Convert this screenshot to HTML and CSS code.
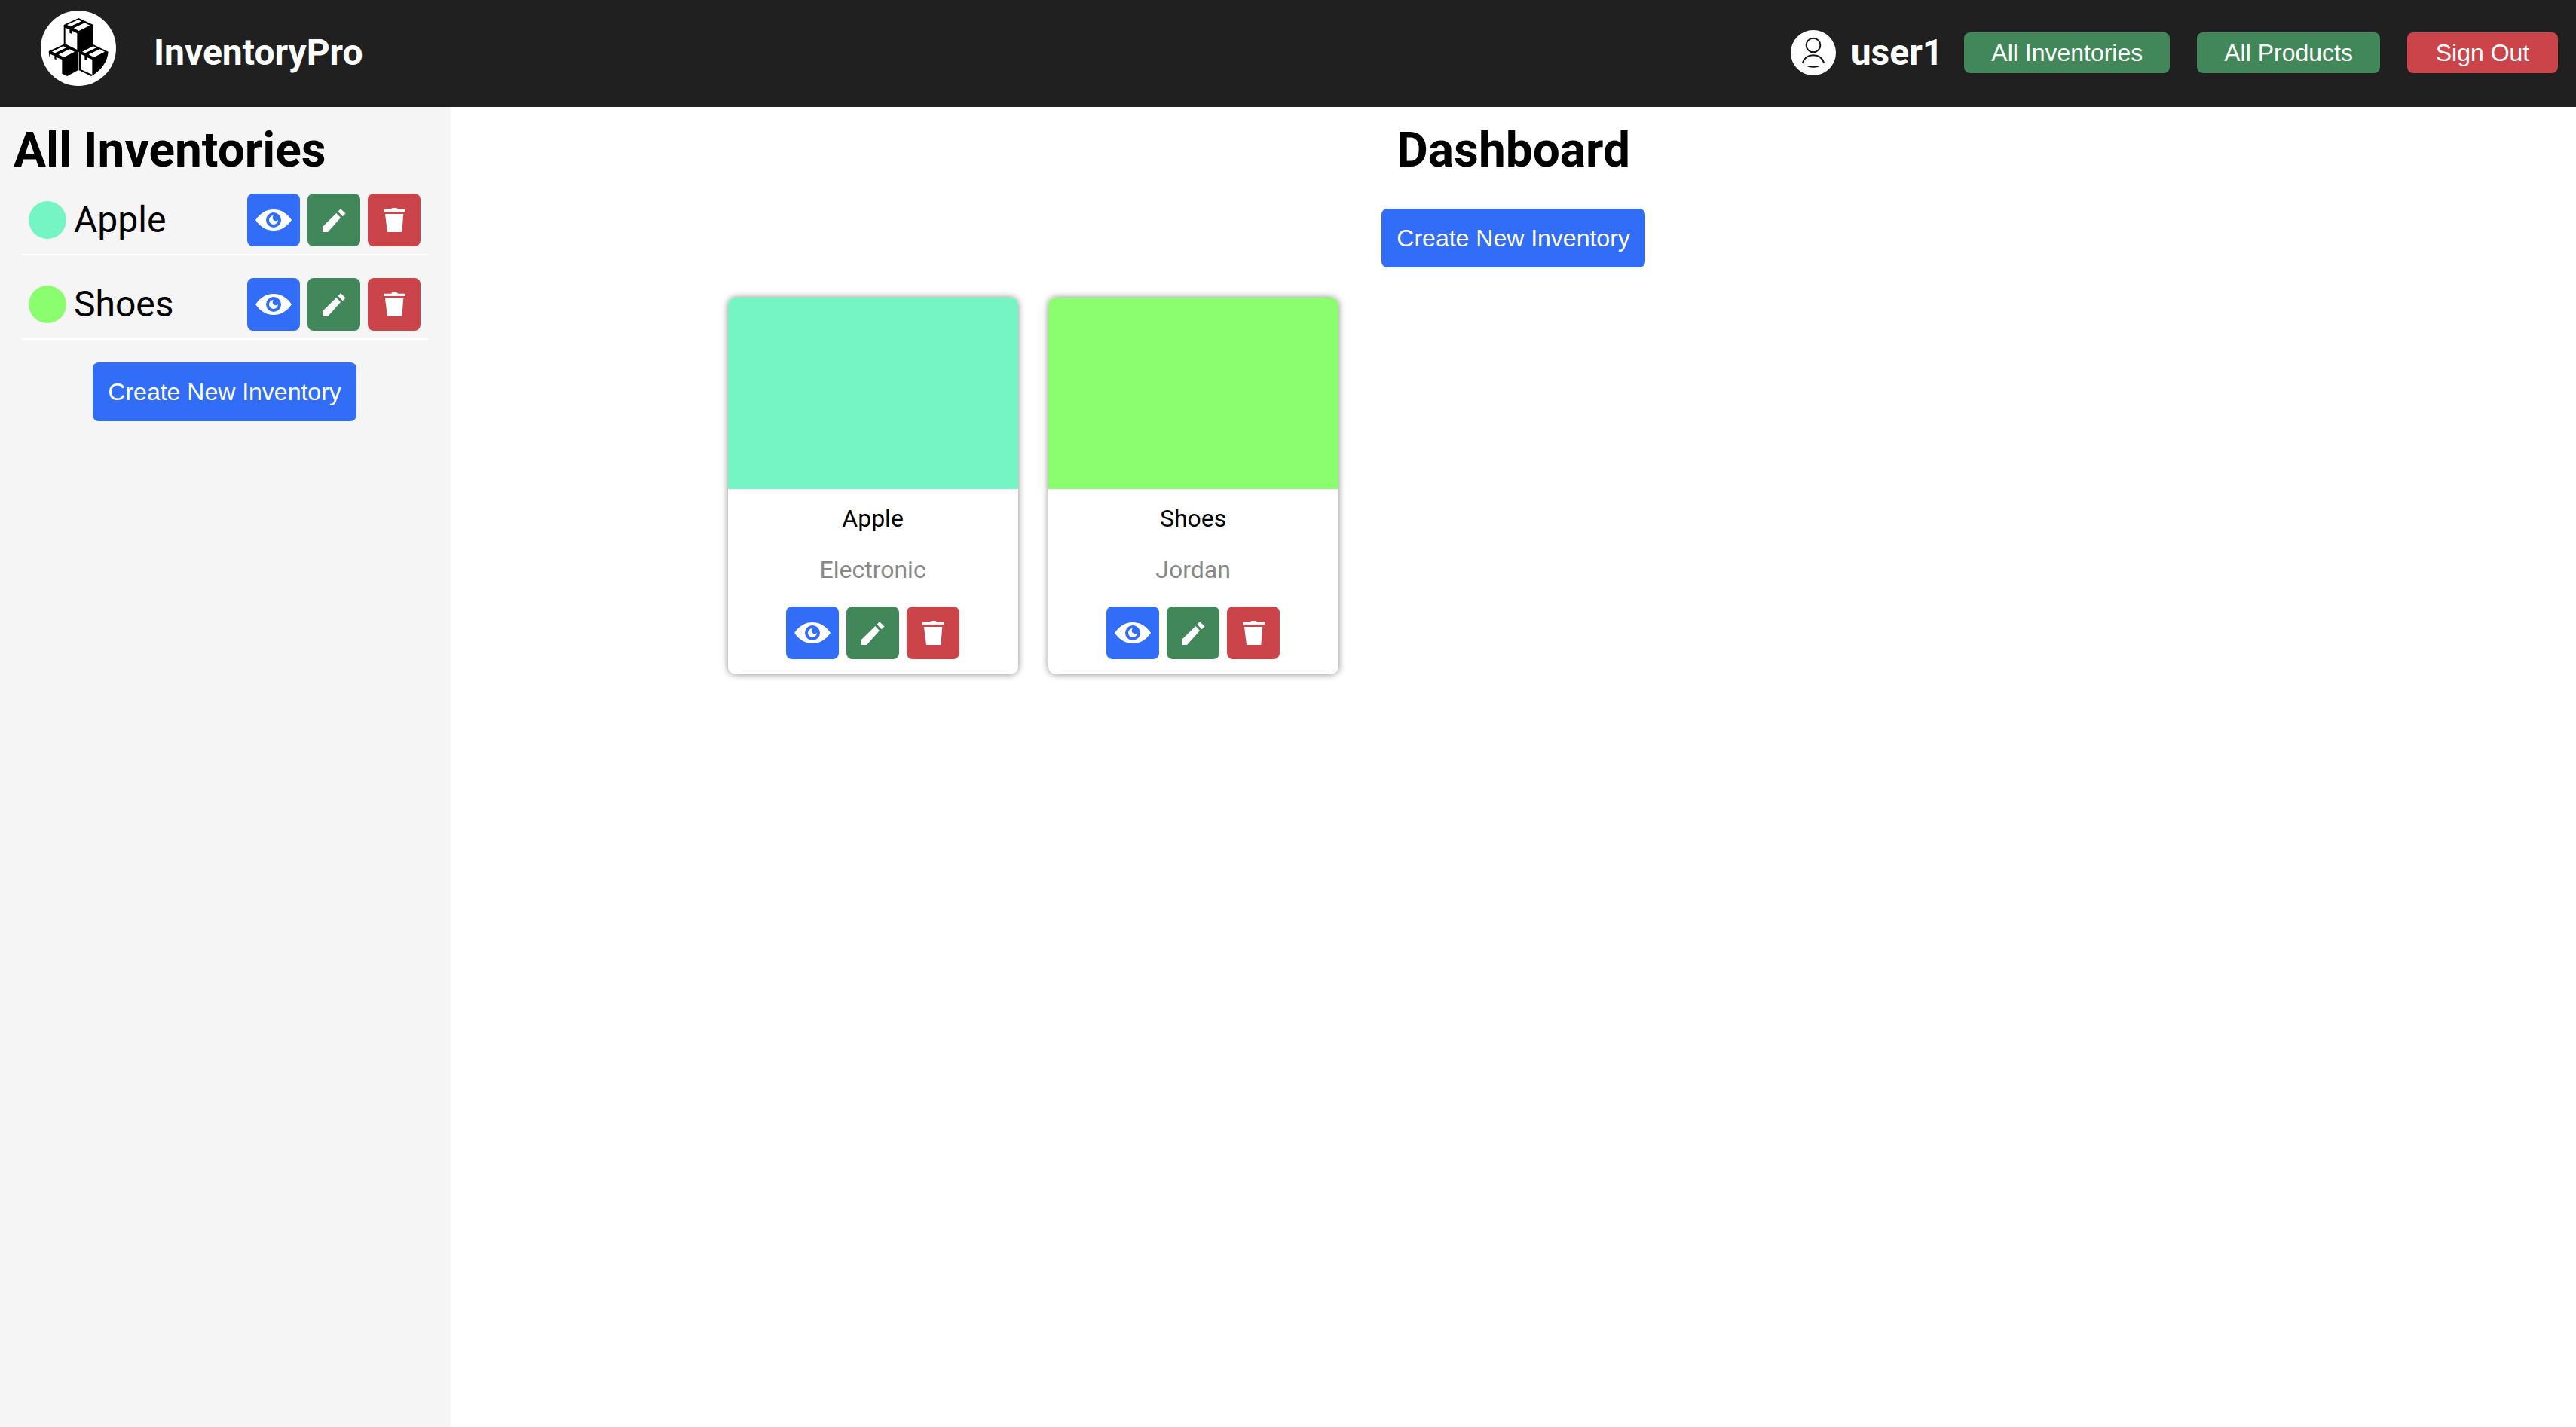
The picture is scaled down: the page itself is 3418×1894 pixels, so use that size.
FILE: index.html
```html
<!DOCTYPE html>
<html lang="en">
<head>
<meta charset="utf-8">
<meta name="viewport" content="width=device-width, initial-scale=1">
<title>InventoryPro</title>
<link rel="stylesheet" href="styles.css">
</head>
<body>
<svg class="sprite" aria-hidden="true">
  <symbol id="eye" viewBox="0 0 48 28">
    <path fill-rule="evenodd" d="M0 14C7 4 15 0 24 0s17 4 24 14c-7 10-15 14-24 14S7 24 0 14zM24 4a10 10 0 1 0 0 20 10 10 0 0 0 0-20z"/>
    <path d="M24 8a6 6 0 1 0 6 6 4 4 0 0 1-6-6z"/>
  </symbol>
  <symbol id="pencil" viewBox="0 0 31 31">
    <path d="M0 24 18.3 6l5.7 6L7 31H0zM20.6 3.8 24 0l6.5 6.6-3.8 3.7z"/>
  </symbol>
  <symbol id="trash" viewBox="0 0 29 32">
    <path d="M0 1.7h10.2Q10.500 0 12 0h5q1.500 0 1.800 1.700H29V5H0zM2 8h24.300l-2 24H5z"/>
  </symbol>
</svg>

<header class="topbar">
  <a class="brand" href="#">
    <svg class="logo" viewBox="42 42 300 300" aria-hidden="true">
      <circle cx="192" cy="192" r="150" fill="#fff"/>
      <path d="M193 72 252 99V178L311 206Q306 262 250 299L243 303 195 280H190L148 303 127 293V237L104 228V238L97 235V223L80 215V238Q75 222 74 204L134 176V99z"/>
      <g fill="#fff">
        <path d="M140 110 157 118V131L168 136V123L187 133V198L140 175z"/>
        <path d="M147 99 191 79 204 85 160 106zM173 112 217 91 238 101 194 123z"/>
        <path d="M87 206 131 184 144 190 100 211zM113 217 157 196 177 206 134 228z"/>
        <path d="M207 206 251 184 264 190 220 211zM233 217 277 196 297 206 254 228z"/>
        <path d="M201 215 217 223V236L228 240V229L247 237V297L201 276z"/>
        <path d="M191 207H194V280H191z"/>
      </g>
    </svg>
    <span>InventoryPro</span>
  </a>
  <nav class="nav">
    <div class="user">
      <svg class="avatar" viewBox="30 30 180 180" aria-hidden="true">
        <circle cx="120" cy="120" r="90" fill="#fff"/>
        <g fill="none" stroke="#111" stroke-width="6"><circle cx="120" cy="90" r="28"/><path d="M77 162C83 142 99 130 120 130S157 142 163 162"/></g>
        <path fill="#111" d="M89 172H151Q120 187 89 172z"/>
      </svg>
      <span>user1</span>
    </div>
    <button class="btn nav-btn green" type="button">All Inventories</button>
    <button class="btn nav-btn green" type="button">All Products</button>
    <button class="btn nav-btn red" type="button">Sign Out</button>
  </nav>
</header>

<div class="layout">
  <aside class="sidebar">
    <h1>All Inventories</h1>
    <ul class="list">
      <li class="row">
        <span class="dot teal"></span><span class="name">Apple</span>
        <div class="actions">
          <button class="btn icon-btn blue" type="button" aria-label="View Apple"><svg class="eye"><use href="#eye"/></svg></button>
          <button class="btn icon-btn green" type="button" aria-label="Edit Apple"><svg class="pencil"><use href="#pencil"/></svg></button>
          <button class="btn icon-btn red" type="button" aria-label="Delete Apple"><svg class="trash"><use href="#trash"/></svg></button>
        </div>
      </li>
      <li class="row">
        <span class="dot lime"></span><span class="name">Shoes</span>
        <div class="actions">
          <button class="btn icon-btn blue" type="button" aria-label="View Shoes"><svg class="eye"><use href="#eye"/></svg></button>
          <button class="btn icon-btn green" type="button" aria-label="Edit Shoes"><svg class="pencil"><use href="#pencil"/></svg></button>
          <button class="btn icon-btn red" type="button" aria-label="Delete Shoes"><svg class="trash"><use href="#trash"/></svg></button>
        </div>
      </li>
    </ul>
    <button class="btn create blue" type="button">Create New Inventory</button>
  </aside>

  <main class="main">
    <h1>Dashboard</h1>
    <button class="btn create blue" type="button">Create New Inventory</button>
    <div class="cards">
      <article class="card">
        <div class="swatch teal"></div>
        <h2>Apple</h2>
        <p>Electronic</p>
        <div class="actions">
          <button class="btn icon-btn blue" type="button" aria-label="View Apple"><svg class="eye"><use href="#eye"/></svg></button>
          <button class="btn icon-btn green" type="button" aria-label="Edit Apple"><svg class="pencil"><use href="#pencil"/></svg></button>
          <button class="btn icon-btn red" type="button" aria-label="Delete Apple"><svg class="trash"><use href="#trash"/></svg></button>
        </div>
      </article>
      <article class="card">
        <div class="swatch lime"></div>
        <h2>Shoes</h2>
        <p>Jordan</p>
        <div class="actions">
          <button class="btn icon-btn blue" type="button" aria-label="View Shoes"><svg class="eye"><use href="#eye"/></svg></button>
          <button class="btn icon-btn green" type="button" aria-label="Edit Shoes"><svg class="pencil"><use href="#pencil"/></svg></button>
          <button class="btn icon-btn red" type="button" aria-label="Delete Shoes"><svg class="trash"><use href="#trash"/></svg></button>
        </div>
      </article>
    </div>
  </main>
</div>
</body>
</html>
```
FILE: styles.css
```css
* { box-sizing: border-box; margin: 0; padding: 0; }
body {
  min-height: 100vh;
  display: flex;
  flex-direction: column;
  font: 32px/40px Roboto, sans-serif;
  color: #000;
  background: #fff;
}
.sprite { display: none; }
h1 { font-size: 64px; line-height: 76px; font-weight: 700; }

.topbar {
  display: flex;
  justify-content: space-between;
  align-items: flex-start;
  padding: 14px 24px 28px 54px;
  background: #202020;
  color: #fff;
  font-size: 48px;
  line-height: 56px;
  font-weight: 700;
}
.brand { display: flex; gap: 50px; color: #fff; text-decoration: none; }
.brand span { padding-top: 28px; }
.logo { width: 100px; height: 100px; }
.nav { display: flex; align-items: center; gap: 36px; padding-top: 26px; }
.user { display: flex; align-items: center; gap: 20px; margin-right: -8px; }
.avatar { width: 60px; height: 60px; }

.btn {
  border: 0;
  border-radius: 8px;
  color: #fff;
  font: 32px/38px "Liberation Sans", Arial, sans-serif;
  cursor: pointer;
}
.nav-btn { min-width: 200px; padding: 8px 36px; }
.create { padding: 20px; }
.blue { background: #316df6; }
.green { background: #428759; }
.red { background: #cb444a; }
.teal { background: #75f5c4; }
.lime { background: #8bfe6f; }

.actions { display: flex; gap: 10px; }
.icon-btn {
  width: 70px;
  height: 70px;
  display: flex;
  align-items: center;
  justify-content: center;
}
.icon-btn svg { fill: #fff; }
.eye { width: 48px; height: 28px; }
.pencil { width: 31px; height: 31px; }
.trash { width: 29px; height: 32px; }

.layout { flex: 1; display: flex; }
.sidebar {
  width: 17.5%;
  display: flex;
  flex-direction: column;
  padding-top: 20px;
  border-right: 2px solid #f5f5f5;
  background: #f5f5f5;
}
.sidebar h1 { padding-left: 18px; }
.sidebar .create { align-self: center; }
.list { list-style: none; margin: 9px 28px 0; }
.row {
  display: flex;
  align-items: center;
  gap: 10px;
  margin-bottom: 20px;
  padding: 10px;
  border-bottom: 2px solid #fff;
}
.row + .row { margin-bottom: 30px; }
.dot { width: 50px; height: 50px; border-radius: 50%; }
.name { flex: 1; font-size: 48px; line-height: 56px; }

.main {
  flex: 1;
  display: flex;
  flex-direction: column;
  align-items: center;
  padding-top: 20px;
}
.main .create { margin-top: 39px; }
.cards {
  align-self: stretch;
  display: grid;
  grid-template-columns: repeat(5, 385px);
  justify-content: center;
  gap: 40px;
  margin-top: 40px;
}
.card {
  display: flex;
  flex-direction: column;
  align-items: center;
  padding-bottom: 20px;
  overflow: hidden;
  border-radius: 10px;
  background: #fff;
  box-shadow: 0 0 10px #888;
}
.swatch { align-self: stretch; height: 254px; }
.card h2 { margin-top: 20px; font-size: 32px; line-height: 38px; font-weight: 400; }
.card p { margin: 30px 0; line-height: 38px; color: #888; }
```
